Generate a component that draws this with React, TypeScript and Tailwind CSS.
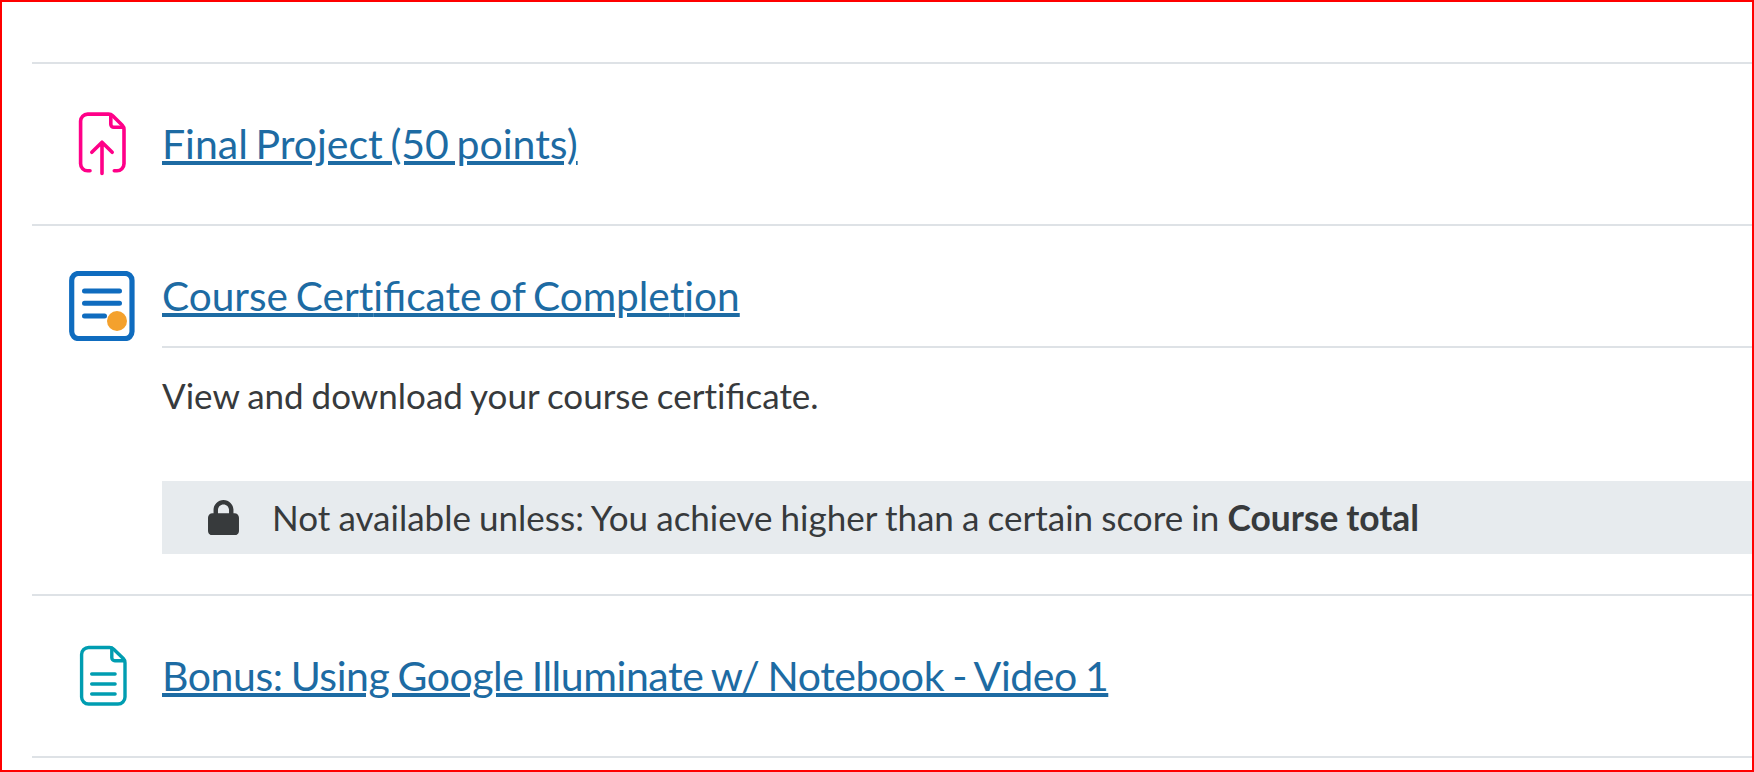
import { ReactNode } from 'react';

export default function App() {
  return (
    <main className="h-[772px] w-full overflow-hidden border-2 border-[#f00] bg-white pl-[30px] pt-[60px] font-[Lato,sans-serif] text-[#373a3c]">
      <ActivityRow icon={<AssignIcon />}>
        <TitleLink className="text-[41px] [word-spacing:-2.9px]">Final Project (50 points)</TitleLink>
      </ActivityRow>
      <section className="flex h-[370px] border-t-2 border-[#dee2e6] pl-[37px]">
        <div className="w-[93px] shrink-0 pt-[45px]">
          <CertificateIcon />
        </div>
        <div className="flex-1">
          <div className="flex h-[122px] items-center border-b-2 border-[#dee2e6] pt-[20px]">
            <TitleLink className="text-[40.6px] [word-spacing:-2.6px]">
              Course Cer<Plain>t</Plain>ificate of Comple<Plain>t</Plain>ion
            </TitleLink>
          </div>
          <p className="pt-[21px] text-[35px] leading-[52px] [word-spacing:-1px]">
            View and download your course cer<Plain>t</Plain>ificate.
          </p>
          <div className="mt-[60px] flex h-[73px] items-center bg-[#e7ebee] pl-[46px] text-[35px] [word-spacing:-0.8px]">
            <LockIcon />
            <p className="ml-[33px] whitespace-nowrap">
              Not available unless: You achieve higher than a certain score in{' '}
              <strong className="text-[35.4px]">Course total</strong>
            </p>
          </div>
        </div>
      </section>
      <ActivityRow icon={<PageIcon />}>
        <TitleLink className="text-[41px] tracking-[-0.45px] [word-spacing:-1.9px]">
          Bonus: Using Google Illuminate w/ Notebook - Video 1
        </TitleLink>
      </ActivityRow>
      <hr className="border-t-2 border-[#dee2e6]" />
    </main>
  );
}

function ActivityRow({ icon, children }: { icon: ReactNode; children: ReactNode }) {
  return (
    <section className="flex h-[162px] items-center border-t-2 border-[#dee2e6] pl-[37px]">
      <div className="w-[93px] shrink-0">{icon}</div>
      {children}
    </section>
  );
}

function TitleLink({ className = '', children }: { className?: string; children: ReactNode }) {
  return (
    <a
      href="#"
      className={`whitespace-nowrap text-[#1d6ba3] underline decoration-[4px] underline-offset-[2px] ${className}`}
    >
      {children}
    </a>
  );
}

// keeps "ti" as two letters while "fi" stays a ligature
function Plain({ children }: { children: ReactNode }) {
  return <span className="[font-variant-ligatures:none]">{children}</span>;
}

function AssignIcon() {
  return (
    <svg className="h-[66px] w-[66px]" viewBox="0 0 66 66" fill="none" stroke="#ff0088" strokeWidth="3.6" strokeLinecap="round" strokeLinejoin="round">
      <path d="M21 59.700h-2.400a7 7 0 0 1-7-7V10.100a7 7 0 0 1 7-7H39.500a6 6 0 0 1 4.200 1.700L53.300 14.300a6 6 0 0 1 1.700 4.200V52.700a7 7 0 0 1-7 7h-2.700" />
      <path d="M41.800 4v9.300a3 3 0 0 0 3 3H54M33 62.500V31.500M22.800 41.300 33 31.200l10.200 10.100" />
    </svg>
  );
}

function CertificateIcon() {
  return (
    <svg className="h-[70px] w-[66px]" viewBox="0 0 66 70" fill="none">
      <rect x="2.7" y="2.4" width="60.300" height="65.2" rx="7" stroke="#0f6cbf" strokeWidth="5.2" />
      <path d="M15.500 20h35M15.500 32.300h35M15.500 45h20" stroke="#0f6cbf" strokeWidth="5" strokeLinecap="round" />
      <circle cx="48" cy="50" r="10" fill="#f4a12d" />
    </svg>
  );
}

function PageIcon() {
  return (
    <svg className="h-[66px] w-[66px]" viewBox="0 0 66 66" fill="none" stroke="#009db1" strokeWidth="3.4" strokeLinecap="round" strokeLinejoin="round">
      <path d="M40.500 4.500H19.600a7 7 0 0 0-7 7V54a7 7 0 0 0 7 7H49a7 7 0 0 0 7-7V19.700a6 6 0 0 0-1.700-4.200L44.700 6.200a6 6 0 0 0-4.200-1.700z" />
      <path d="M42.800 5.200v9.500a3 3 0 0 0 3 3H55M22.700 31h23.400M22.700 41h23.400M22.700 51h23.400" />
    </svg>
  );
}

function LockIcon() {
  return (
    <svg className="h-[35.4px] w-[31px] shrink-0" viewBox="0 0 448 512" fill="#373a3c">
      <path d="M144 144v48h160v-48c0-44.200-35.800-80-80-80s-80 35.800-80 80zM80 192v-48C80 64.500 144.500 0 224 0s144 64.500 144 144v48h16c35.300 0 64 28.700 64 64v192c0 35.300-28.700 64-64 64H64c-35.300 0-64-28.700-64-64V256c0-35.300 28.700-64 64-64h16z" />
    </svg>
  );
}
